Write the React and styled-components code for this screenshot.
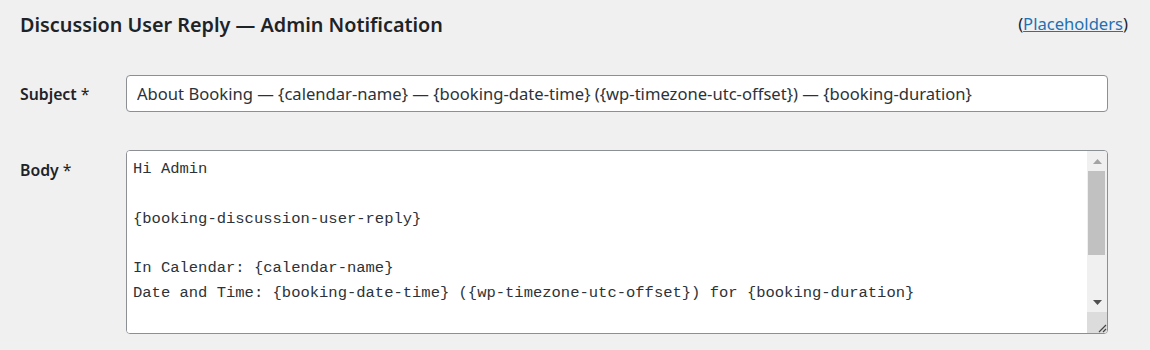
import React from "react";
import styled, { createGlobalStyle } from "styled-components";

const GlobalStyle = createGlobalStyle`
  body {
    margin: 0;
    background: #f0f0f1;
    font-family: "Noto Sans", "Open Sans", sans-serif;
    color: #1d2327;
  }
`;

const Page = styled.div`
  width: 1150px;
  height: 350px;
  box-sizing: border-box;
  padding: 10px 22px 0 20px;
  overflow: hidden;
`;

const Header = styled.div`
  display: flex;
  justify-content: space-between;
  align-items: center;
`;

const Title = styled.h2`
  margin: 0;
  font-size: 19.8px;
  font-weight: 600;
  line-height: 30px;
`;

const HelpLink = styled.span`
  font-size: 16.6px;
  line-height: 26px;
  margin-bottom: 3px;
  a {
    color: #2271b1;
    text-decoration: underline;
  }
`;

const Row = styled.div`
  display: grid;
  grid-template-columns: 106px 982px;
  align-items: ${p => (p.top ? "start" : "center")};
  margin-top: ${p => p.gap}px;
`;

const Label = styled.label`
  font-size: 15.8px;
  font-weight: 600;
  padding-top: ${p => (p.top ? "9px" : "0")};
`;

const Star = styled.span`
  font-weight: 400;
`;

const TextInput = styled.input`
  box-sizing: border-box;
  height: 37px;
  width: 100%;
  padding: 0 10px;
  border: 1px solid #8c8f94;
  border-radius: 4px;
  background: #fff;
  font-family: "Noto Sans", "Open Sans", sans-serif;
  font-size: 16.6px;
  color: #2c3338;
  outline: none;
`;

const AreaBox = styled.div`
  position: relative;
  box-sizing: border-box;
  height: 184px;
  border: 1px solid #8c8f94;
  border-radius: 4px;
  background: #fff;
  display: flex;
  overflow: hidden;
`;

const Area = styled.textarea`
  flex: 1;
  border: 0;
  resize: none;
  overflow: hidden;
  padding: 6px 6px 0;
  margin: 0;
  font-family: "Liberation Mono", "DejaVu Sans Mono", monospace;
  font-size: 15.5px;
  line-height: 24.8px;
  color: #2c3338;
  outline: none;
  white-space: pre;
`;

const Scrollbar = styled.div`
  width: 20px;
  display: flex;
  flex-direction: column;
  background: #f0f0f0;
`;

const ArrowBtn = styled.div`
  height: 20px;
  display: flex;
  align-items: center;
  justify-content: center;
`;

const Thumb = styled.div`
  height: 84px;
  margin: 0 2px 0 1px;
  background: #c1c1c1;
`;

const Track = styled.div`
  flex: 1;
`;

const Corner = styled.div`
  height: 21px;
  background: #dcdcdc;
  display: flex;
  align-items: flex-end;
  justify-content: flex-end;
`;

const Arrow = ({ up, color }) => (
  <svg width="9" height="5" viewBox="0 0 9 5">
    <polygon points={up ? "0,5 9,5 4.5,0" : "0,0 9,0 4.5,5"} fill={color} />
  </svg>
);

const body = `Hi Admin

{booking-discussion-user-reply}

In Calendar: {calendar-name}
Date and Time: {booking-date-time} ({wp-timezone-utc-offset}) for {booking-duration}`;

export default function App() {
  return (
    <Page>
      <GlobalStyle />
      <Header>
        <Title>Discussion User Reply — Admin Notification</Title>
        <HelpLink>
          (<a href="#">Placeholders</a>)
        </HelpLink>
      </Header>
      <Row gap={35}>
        <Label>
          Subject <Star>*</Star>
        </Label>
        <TextInput
          readOnly
          value="About Booking — {calendar-name} — {booking-date-time} ({wp-timezone-utc-offset}) — {booking-duration}"
        />
      </Row>
      <Row gap={38} top>
        <Label top>
          Body <Star>*</Star>
        </Label>
        <AreaBox>
          <Area readOnly value={body} />
          <Scrollbar>
            <ArrowBtn>
              <Arrow up color="#a3a3a3" />
            </ArrowBtn>
            <Thumb />
            <Track />
            <ArrowBtn>
              <Arrow color="#505050" />
            </ArrowBtn>
            <Corner>
              <svg width="10" height="10" viewBox="0 0 10 10">
                <path d="M9 2 L2 9 M9 6 L6 9" stroke="#444" strokeWidth="1.2" />
              </svg>
            </Corner>
          </Scrollbar>
        </AreaBox>
      </Row>
    </Page>
  );
}
